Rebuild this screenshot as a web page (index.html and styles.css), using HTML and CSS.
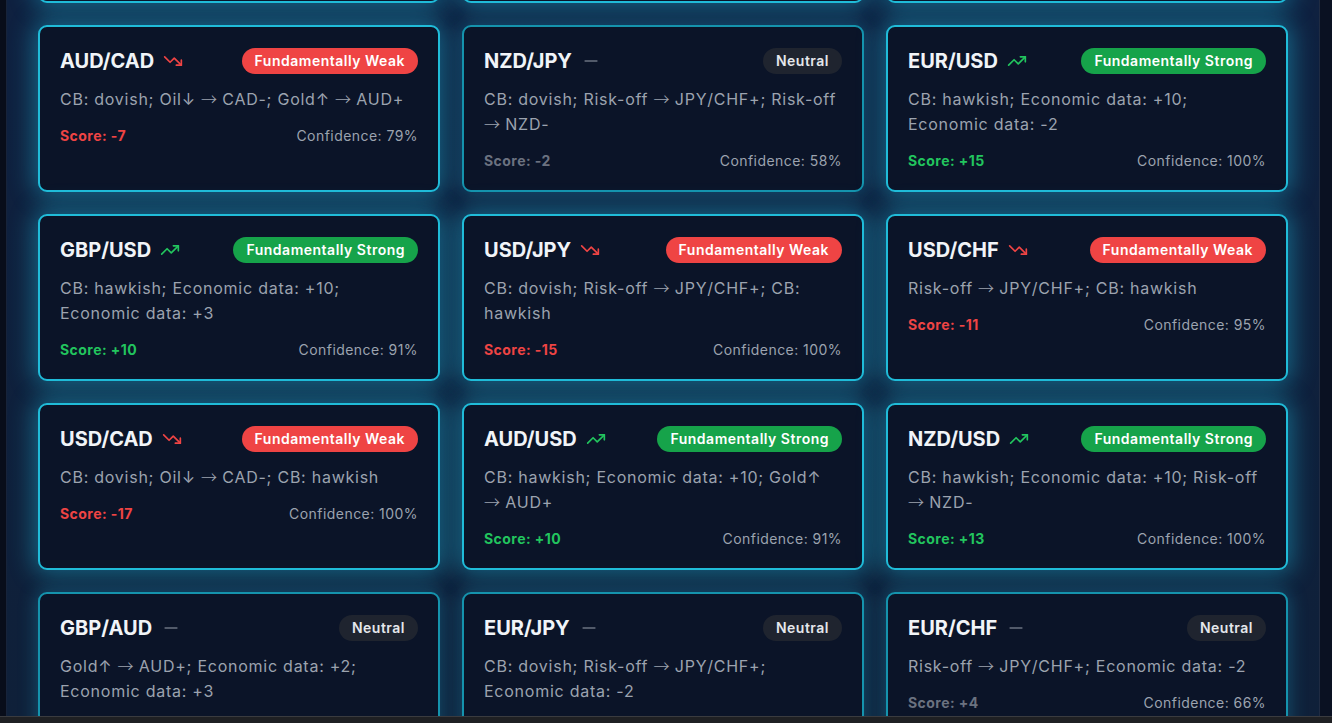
FILE: index.html
```html
<!DOCTYPE html>
<html lang="en">
<head>
<meta charset="utf-8">
<title>Fundamental Bias</title>
<link rel="stylesheet" href="styles.css">
</head>
<body>
<div class="layout">
  <main class="panel">
    <div class="grid">
      <div class="card bright"><div class="head"><div class="pair"><span class="name">GBP/JPY</span><svg class="ic down" viewBox="0 0 24 24"><polyline points="22 17 13.5 8.5 8.5 13.5 2 7"/><polyline points="16 17 22 17 22 11"/></svg></div><span class="badge weak">Fundamentally Weak</span></div><p class="desc">CB: dovish; Risk-off <span class="ar">→</span> JPY/CHF+</p><div class="foot"><span class="score neg">Score: -8</span><span class="conf">Confidence: 80%</span></div></div>
      <div class="card bright"><div class="head"><div class="pair"><span class="name">EUR/GBP</span><svg class="ic flat" viewBox="0 0 24 24"><path d="M5 12h14"/></svg></div><span class="badge neutral">Neutral</span></div><p class="desc">CB: hawkish; Economic data: -2</p><div class="foot"><span class="score zero">Score: +1</span><span class="conf">Confidence: 60%</span></div></div>
      <div class="card bright"><div class="head"><div class="pair"><span class="name">CAD/JPY</span><svg class="ic flat" viewBox="0 0 24 24"><path d="M5 12h14"/></svg></div><span class="badge neutral">Neutral</span></div><p class="desc">Oil↓ <span class="ar">→</span> CAD-; CB: dovish</p><div class="foot"><span class="score zero">Score: -3</span><span class="conf">Confidence: 64%</span></div></div>

      <div class="card bright"><div class="head"><div class="pair"><span class="name">AUD/CAD</span><svg class="ic down" viewBox="0 0 24 24"><polyline points="22 17 13.5 8.5 8.5 13.5 2 7"/><polyline points="16 17 22 17 22 11"/></svg></div><span class="badge weak">Fundamentally Weak</span></div><p class="desc">CB: dovish; Oil↓ <span class="ar">→</span> CAD-; Gold↑ <span class="ar">→</span> AUD+</p><div class="foot"><span class="score neg">Score: -7</span><span class="conf">Confidence: 79%</span></div></div>
      <div class="card dim"><div class="head"><div class="pair"><span class="name">NZD/JPY</span><svg class="ic flat" viewBox="0 0 24 24"><path d="M5 12h14"/></svg></div><span class="badge neutral">Neutral</span></div><p class="desc">CB: dovish; Risk-off <span class="ar">→</span> JPY/CHF+; Risk-off <span class="ar">→</span> NZD-</p><div class="foot"><span class="score zero">Score: -2</span><span class="conf">Confidence: 58%</span></div></div>
      <div class="card bright"><div class="head"><div class="pair"><span class="name">EUR/USD</span><svg class="ic up" viewBox="0 0 24 24"><polyline points="22 7 13.5 15.5 8.5 10.5 2 17"/><polyline points="16 7 22 7 22 13"/></svg></div><span class="badge strong">Fundamentally Strong</span></div><p class="desc">CB: hawkish; Economic data: +10; Economic data: -2</p><div class="foot"><span class="score pos">Score: +15</span><span class="conf">Confidence: 100%</span></div></div>

      <div class="card bright"><div class="head"><div class="pair"><span class="name">GBP/USD</span><svg class="ic up" viewBox="0 0 24 24"><polyline points="22 7 13.5 15.5 8.5 10.5 2 17"/><polyline points="16 7 22 7 22 13"/></svg></div><span class="badge strong">Fundamentally Strong</span></div><p class="desc">CB: hawkish; Economic data: +10; Economic data: +3</p><div class="foot"><span class="score pos">Score: +10</span><span class="conf">Confidence: 91%</span></div></div>
      <div class="card bright"><div class="head"><div class="pair"><span class="name">USD/JPY</span><svg class="ic down" viewBox="0 0 24 24"><polyline points="22 17 13.5 8.5 8.5 13.5 2 7"/><polyline points="16 17 22 17 22 11"/></svg></div><span class="badge weak">Fundamentally Weak</span></div><p class="desc">CB: dovish; Risk-off <span class="ar">→</span> JPY/CHF+; CB: hawkish</p><div class="foot"><span class="score neg">Score: -15</span><span class="conf">Confidence: 100%</span></div></div>
      <div class="card bright"><div class="head"><div class="pair"><span class="name">USD/CHF</span><svg class="ic down" viewBox="0 0 24 24"><polyline points="22 17 13.5 8.5 8.5 13.5 2 7"/><polyline points="16 17 22 17 22 11"/></svg></div><span class="badge weak">Fundamentally Weak</span></div><p class="desc">Risk-off <span class="ar">→</span> JPY/CHF+; CB: hawkish</p><div class="foot"><span class="score neg">Score: -11</span><span class="conf">Confidence: 95%</span></div></div>

      <div class="card bright"><div class="head"><div class="pair"><span class="name">USD/CAD</span><svg class="ic down" viewBox="0 0 24 24"><polyline points="22 17 13.5 8.5 8.5 13.5 2 7"/><polyline points="16 17 22 17 22 11"/></svg></div><span class="badge weak">Fundamentally Weak</span></div><p class="desc">CB: dovish; Oil↓ <span class="ar">→</span> CAD-; CB: hawkish</p><div class="foot"><span class="score neg">Score: -17</span><span class="conf">Confidence: 100%</span></div></div>
      <div class="card bright"><div class="head"><div class="pair"><span class="name">AUD/USD</span><svg class="ic up" viewBox="0 0 24 24"><polyline points="22 7 13.5 15.5 8.5 10.5 2 17"/><polyline points="16 7 22 7 22 13"/></svg></div><span class="badge strong">Fundamentally Strong</span></div><p class="desc">CB: hawkish; Economic data: +10; Gold↑ <span class="ar">→</span> AUD+</p><div class="foot"><span class="score pos">Score: +10</span><span class="conf">Confidence: 91%</span></div></div>
      <div class="card bright"><div class="head"><div class="pair"><span class="name">NZD/USD</span><svg class="ic up" viewBox="0 0 24 24"><polyline points="22 7 13.5 15.5 8.5 10.5 2 17"/><polyline points="16 7 22 7 22 13"/></svg></div><span class="badge strong">Fundamentally Strong</span></div><p class="desc">CB: hawkish; Economic data: +10; Risk-off <span class="ar">→</span> NZD-</p><div class="foot"><span class="score pos">Score: +13</span><span class="conf">Confidence: 100%</span></div></div>

      <div class="card dim"><div class="head"><div class="pair"><span class="name">GBP/AUD</span><svg class="ic flat" viewBox="0 0 24 24"><path d="M5 12h14"/></svg></div><span class="badge neutral">Neutral</span></div><p class="desc">Gold↑ <span class="ar">→</span> AUD+; Economic data: +2; Economic data: +3</p><div class="foot"><span class="score zero">Score: +5</span><span class="conf">Confidence: 70%</span></div></div>
      <div class="card dim"><div class="head"><div class="pair"><span class="name">EUR/JPY</span><svg class="ic flat" viewBox="0 0 24 24"><path d="M5 12h14"/></svg></div><span class="badge neutral">Neutral</span></div><p class="desc">CB: dovish; Risk-off <span class="ar">→</span> JPY/CHF+; Economic data: -2</p><div class="foot"><span class="score zero">Score: -2</span><span class="conf">Confidence: 62%</span></div></div>
      <div class="card dim"><div class="head"><div class="pair"><span class="name">EUR/CHF</span><svg class="ic flat" viewBox="0 0 24 24"><path d="M5 12h14"/></svg></div><span class="badge neutral">Neutral</span></div><p class="desc">Risk-off <span class="ar">→</span> JPY/CHF+; Economic data: -2</p><div class="foot"><span class="score zero">Score: +4</span><span class="conf">Confidence: 66%</span></div></div>
    </div>
  </main>
  <div class="rail"></div>
</div>
<div class="hbar"></div>
</body>
</html>
```

FILE: styles.css
```css
* { box-sizing: border-box; }
html, body { margin: 0; padding: 0; }
body {
  width: 1332px;
  height: 723px;
  overflow: hidden;
  background: #080d1a;
  font-family: Inter, "Noto Sans", sans-serif;
}
.layout {
  display: flex;
  height: 723px;
  padding-left: 6px;
}
.panel {
  flex: 1;
  overflow: hidden;
  border-left: 1px solid #17233a;
  border-right: 1px solid #1f2b42;
  background: linear-gradient(180deg, #0f2140 0%, #0f2039 100%);
  padding: 0 31px;
}
.rail {
  width: 12px;
  background: #0a1122;
}
.grid {
  margin-top: -139px;
  display: grid;
  grid-template-columns: repeat(3, 1fr);
  gap: 22px;
}
.card {
  background: #0b1428;
  border: 2px solid #20bcd9;
  border-radius: 9px;
  padding: 20px 20px 19px;
  box-shadow: 0 0 24px 4px rgba(34, 200, 235, 0.42);
  display: flex;
  flex-direction: column;
}
.card.dim {
  border-color: #1593ad;
  box-shadow: 0 0 18px 2px rgba(34, 180, 220, 0.3);
}
.head {
  display: flex;
  align-items: center;
  justify-content: space-between;
  height: 28px;
}
.pair {
  display: flex;
  align-items: center;
  gap: 9px;
}
.name {
  font-size: 20px;
  font-weight: 700;
  color: #f1f4f8;
  line-height: 28px;
}
.ic {
  width: 20px;
  height: 20px;
  fill: none;
  stroke-width: 2;
  stroke-linecap: round;
  stroke-linejoin: round;
}
.ic.down { stroke: #ef4444; }
.ic.up { stroke: #22c55e; }
.ic.flat { stroke: #6b7280; }
.badge {
  font-size: 14px;
  font-weight: 600;
  line-height: 20px;
  letter-spacing: 0.5px;
  padding: 3px 13px;
  border-radius: 999px;
  color: #ffffff;
}
.badge.weak { background: #ef4444; }
.badge.strong { background: #16a34a; }
.badge.neutral { background: #1f242f; color: #e5e7eb; }
.desc {
  margin: 12px 0 0;
  font-size: 16px;
  line-height: 25px;
  letter-spacing: 0.75px;
  color: #9ca3af;
}
.ar {
  font-family: "Noto Sans CJK SC", "DejaVu Sans", sans-serif;
  font-weight: 300;
  letter-spacing: 0;
  line-height: 0;
}
.foot {
  margin-top: 14px;
  display: flex;
  justify-content: space-between;
  align-items: center;
  font-size: 14px;
  line-height: 20px;
  letter-spacing: 0.45px;
}
.score { font-weight: 700; }
.score.neg { color: #ef4444; }
.score.pos { color: #22c55e; }
.score.zero { color: #6b7280; }
.conf { color: #9ca3af; }
.hbar {
  position: fixed;
  left: 0;
  right: 0;
  bottom: 0;
  height: 7px;
  background: #1f2023;
  border-top: 1px solid #3a3b3f;
}
```
